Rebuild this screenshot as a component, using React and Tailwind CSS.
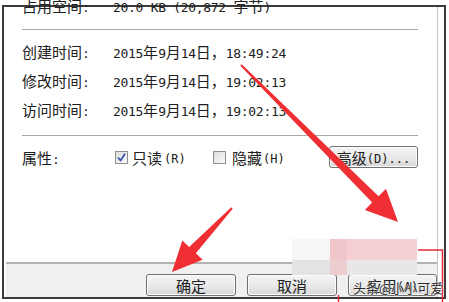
import React from "react";

function Mixed({ text }) {
  const parts = text.match(/[\x20-\x7e]+|[^\x20-\x7e]+/g) || [];
  return parts.map((p, i) =>
    /^[\x20-\x7e]+$/.test(p) ? (
      <span key={i} className="font-['DejaVu_Sans_Mono',monospace] text-[13px] tracking-[-0.3px] whitespace-pre">
        {p}
      </span>
    ) : (
      <span key={i} className="text-[15px]">
        {p}
      </span>
    )
  );
}

function Row({ label, value, className = "h-[29px]" }) {
  return (
    <div className={"flex items-center " + className}>
      <div className="w-[91px] shrink-0 leading-none whitespace-nowrap">
        <Mixed text={label} />
      </div>
      <div className="leading-none whitespace-nowrap">
        <Mixed text={value} />
      </div>
    </div>
  );
}

function Check({ checked }) {
  return (
    <div className="w-[13px] h-[13px] border border-[#8e8f8f] bg-linear-to-br from-[#dcdcdc] to-[#fbfbfb] flex items-center justify-center">
      {checked && (
        <svg width="11" height="11" viewBox="0 0 11 11">
          <path d="M2 5.5 L4.5 8.5 L9 1.8" fill="none" stroke="#3b4fa8" strokeWidth="1.8" strokeLinejoin="round" />
        </svg>
      )}
    </div>
  );
}

function Btn({ children, className = "w-[90px]" }) {
  return (
    <div
      className={
        "h-[22px] rounded-[3px] border border-[#707070] bg-linear-to-b from-[#f4f4f4] via-[#ebebeb] to-[#d6d6d6] flex items-center justify-center leading-none shadow-[inset_0_0_0_1px_#fcfcfc] " +
        className
      }
    >
      {children}
    </div>
  );
}

export default function App() {
  return (
    <div className="relative w-[449px] h-[302px] overflow-hidden bg-white text-[#202020] font-['Noto_Sans_CJK_SC',sans-serif]">
      <div className="ml-[2px] mt-[5px] w-[444px] h-[294px] border-2 border-[#3c3c3c] flex">
        <div className="ml-[2px] w-[432px] flex flex-col border-r border-[#c4c4c4]">
          <div className="flex-1 pl-[16px] pr-[19px] flex flex-col">
            <Row label="占用空间:" value="20.0 KB (20,872 字节)" className="h-[20px] mt-[-12px]" />
            <div className="mt-[14px] h-px bg-[#a9a9a9]" />
            <div className="mt-[7px]">
              <Row label="创建时间:" value="2015年9月14日，18:49:24" />
              <Row label="修改时间:" value="2015年9月14日，19:02:13" />
              <Row label="访问时间:" value="2015年9月14日，19:02:13" />
            </div>
            <div className="mt-[11px] h-px bg-[#a9a9a9]" />
            <div className="mt-[9px] h-[24px] flex items-center">
              <div className="w-[91px] shrink-0 leading-none">
                <Mixed text="属性:" />
              </div>
              <div className="w-[100px] flex items-center leading-none">
                <div className="ml-[2px] mr-[4px]">
                  <Check checked />
                </div>
                <span className="text-[15px]">只读</span>
                <span className="ml-[2px] mt-[3px] font-['DejaVu_Sans_Mono',monospace] text-[12px]">(R)</span>
              </div>
              <div className="flex items-center leading-none">
                <div className="mr-[6px]">
                  <Check />
                </div>
                <span className="text-[15px]">隐藏</span>
                <span className="ml-[1px] mt-[3px] font-['DejaVu_Sans_Mono',monospace] text-[12px]">(H)</span>
              </div>
              <div className="ml-auto">
                <Btn className="w-[89px] h-[21px]">
                  <span className="text-[15px]">高级</span>
                  <span className="mt-[3px] font-['DejaVu_Sans_Mono',monospace] text-[12px] whitespace-pre">(D)...</span>
                </Btn>
              </div>
            </div>
          </div>
          <div className="h-[35px] border-t-2 border-[#b2b2b2] bg-[#f0f0f0] pt-[10px] flex justify-end gap-[11px]">
            <Btn>
              <span className="text-[15px]">确定</span>
            </Btn>
            <Btn>
              <span className="text-[15px]">取消</span>
            </Btn>
            <Btn className="w-[89px]">
              <span className="text-[15px]">应用</span>
              <span className="mt-[3px] font-['DejaVu_Sans_Mono',monospace] text-[12px]">(A)</span>
            </Btn>
          </div>
        </div>
        <div className="flex-1" />
      </div>

      {/* mosaic blur blocks */}
      <div className="absolute left-[292px] top-[239px] w-[38px] h-[21px] bg-[#f6f6f6]" />
      <div className="absolute left-[292px] top-[260px] w-[38px] h-[15px] bg-[#e3e3e3]" />
      <div className="absolute left-[330px] top-[239px] w-[17px] h-[21px] bg-[#f1c6ca]" />
      <div className="absolute left-[330px] top-[260px] w-[17px] h-[15px] bg-[#eccdd0]" />
      <div className="absolute left-[347px] top-[239px] w-[70px] h-[21px] bg-[#f6cfd2]" />
      <div className="absolute left-[347px] top-[260px] w-[70px] h-[15px] bg-[#e8e6e6]" />

      <svg className="absolute left-0 top-0 pointer-events-none" width="449" height="302" viewBox="0 0 449 302">
        <polygon
          points="241.7,64.3 378.6,196.2 386,188.8 398,222 364.8,210 372.2,202.6 240.3,65.7"
          fill="#ef2f33"
        />
        <polygon
          points="232.7,208.7 195.8,253.2 202.7,259.7 172,272 182.3,240.5 189.2,247.0 231.3,207.3"
          fill="#ef2f33"
        />
        <path d="M418 250 H442.5 V302" fill="none" stroke="#e0283a" strokeWidth="1.5" />
        <path d="M338.5 295 V302" fill="none" stroke="#e0283a" strokeWidth="1.5" />
      </svg>

      <div className="absolute left-[353px] top-[281px] text-[13px] leading-none text-[#2a2a2a] whitespace-nowrap [text-shadow:0_0_2px_#fff,0_0_1px_#fff]">
        头条@小小可爱
      </div>
    </div>
  );
}
